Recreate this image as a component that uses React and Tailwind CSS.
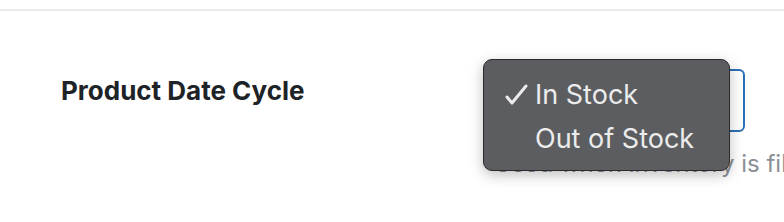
export default function App() {
  return (
    <div className="relative w-[784px] h-[222px] overflow-hidden bg-white font-['Inter',sans-serif]">
      {/* top divider */}
      <div className="mt-[9px] h-[2px] bg-[#ebebeb]" />

      {/* setting row */}
      <div className="flex pt-[58px]">
        <div className="w-[484px] shrink-0 pl-[61px] pt-[2px] text-[26px] font-bold text-[#1d2327]">
          Product Date Cycle
        </div>
        <div className="flex flex-col">
          <div className="w-[261px] h-[63px] rounded-[6px] border-2 border-[#2c6fb5] bg-white" />
          <p className="mt-[14px] ml-[10px] whitespace-nowrap text-[24px] text-[#8c8f94]">
            Used when inventory is filled
          </p>
        </div>
      </div>

      {/* native select popup */}
      <div className="absolute left-[483px] top-[59px] w-[247px] h-[112px] rounded-[9px] border border-[#2b2b2b] bg-[#5b5d60] shadow-[0_4px_14px_rgba(0,0,0,0.25)]">
        <div className="flex h-full flex-col pt-[13px] text-[27px] text-[#ececec]">
          <div className="flex items-center h-[44px]">
            <span className="w-[51px] pl-[21px]">
              <svg width="24" height="22" viewBox="0 0 24 22" className="block">
                <polyline
                  points="2,13 7,19 21,2"
                  fill="none"
                  stroke="#ececec"
                  strokeWidth="3"
                  strokeLinecap="round"
                  strokeLinejoin="round"
                />
              </svg>
            </span>
            <span>In Stock</span>
          </div>
          <div className="flex items-center h-[44px]">
            <span className="w-[51px]" />
            <span>Out of Stock</span>
          </div>
        </div>
      </div>
    </div>
  )
}
